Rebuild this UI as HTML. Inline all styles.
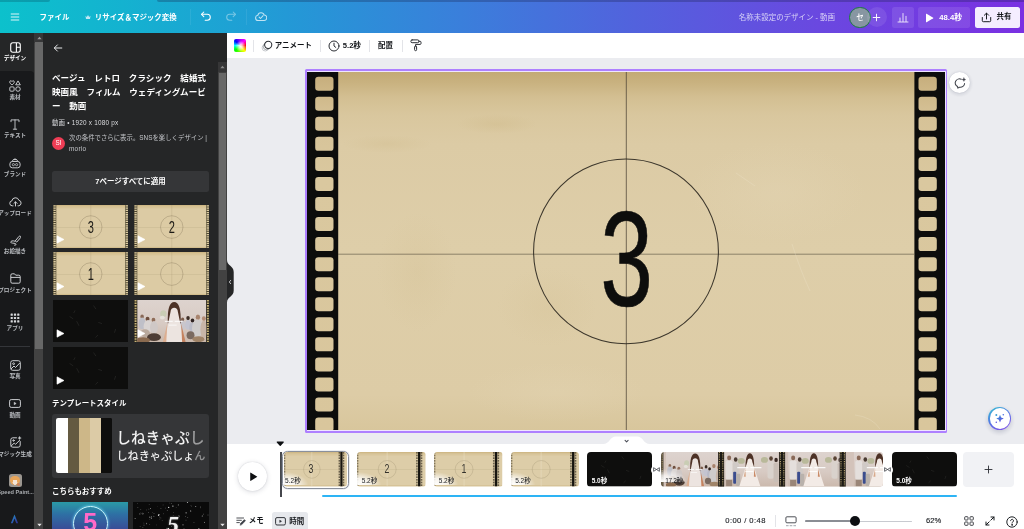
<!DOCTYPE html><html lang="ja"><head><meta charset="utf-8"><title>Canva</title><style>
*{box-sizing:border-box;margin:0;padding:0}
html,body{width:1024px;height:529px;overflow:hidden;background:#ebecf0}
body{font-family:"Liberation Sans","Noto Sans CJK JP",sans-serif;position:relative;-webkit-font-smoothing:antialiased}
div,svg{position:absolute}
.t{position:absolute;letter-spacing:0}
</style></head><body><div id="app" style="left:0;top:0;width:1024px;height:529px;will-change:transform;opacity:.999">
<svg width="0" height="0" style="left:0;top:0"><defs>
<filter id="b1" x="-20%" y="-20%" width="140%" height="140%"><feGaussianBlur stdDeviation="1.2"/></filter>
<filter id="b2" x="-20%" y="-20%" width="140%" height="140%"><feGaussianBlur stdDeviation="0.6"/></filter>
<linearGradient id="wall" x1="0" y1="0" x2="0" y2="1"><stop offset="0" stop-color="#ddd3ce"/><stop offset="0.55" stop-color="#d8cbc4"/><stop offset="1" stop-color="#cbb9ad"/></linearGradient>
<symbol id="wed" viewBox="0 0 70 43" preserveAspectRatio="none">
<rect width="70" height="43" fill="url(#wall)"/>
<g filter="url(#b2)">
<ellipse cx="26.500" cy="14" rx="3.200" ry="3.600" fill="#c9cdb4"/>
<ellipse cx="25.500" cy="18" rx="2.500" ry="2" fill="#e6e2da"/>
<ellipse cx="5" cy="17" rx="1.800" ry="2.200" fill="#8a6a58"/>
<ellipse cx="5" cy="24" rx="3.500" ry="6" fill="#bfc0c8"/>
<ellipse cx="10.500" cy="19.500" rx="2" ry="2.400" fill="#6e4e3e"/>
<ellipse cx="11" cy="27" rx="4.500" ry="6.500" fill="#d9d4d2"/>
<ellipse cx="16.500" cy="20.500" rx="1.900" ry="2.300" fill="#8f6c58"/>
<ellipse cx="17" cy="28" rx="4" ry="6.500" fill="#cfc8c6"/>
<ellipse cx="8" cy="34" rx="5" ry="4" fill="#b9a99c"/>
<ellipse cx="17" cy="38" rx="7" ry="4" fill="#4e3e34"/>
<ellipse cx="6" cy="41" rx="7" ry="3" fill="#8a6a50"/>
<ellipse cx="46" cy="20" rx="1.600" ry="2" fill="#7a5a4a"/>
<ellipse cx="46" cy="26" rx="3" ry="5" fill="#c9c6cc"/>
<ellipse cx="51.500" cy="18.500" rx="1.800" ry="2.200" fill="#3e2e28"/>
<ellipse cx="51.500" cy="25.500" rx="3" ry="5" fill="#c4c4d0"/>
<ellipse cx="56" cy="21" rx="1.800" ry="2.200" fill="#2e2420"/>
<ellipse cx="56" cy="28" rx="3.200" ry="5" fill="#b9bac6"/>
<ellipse cx="61.500" cy="17.500" rx="2.200" ry="2.600" fill="#a8846e"/>
<ellipse cx="61" cy="29" rx="5.500" ry="9" fill="#cfcccb"/>
<ellipse cx="67.500" cy="19" rx="2" ry="2.500" fill="#b48c74"/>
<ellipse cx="67.500" cy="30" rx="3.500" ry="9" fill="#c8b6a8"/>
<ellipse cx="54" cy="36" rx="4" ry="4" fill="#7a6a60"/>
<ellipse cx="62" cy="40" rx="6" ry="3" fill="#a08468"/>
<path d="M31 24C30.500 8 33 2 37.500 2C42 2 44.500 8 44 24Z" fill="#4e3226"/>
<path d="M33.800 12C33.800 6.500 41.200 6.500 41.200 12L47.500 43L27.500 43Z" fill="#ece4e0"/>
<path d="M30.500 24L26 43L29.500 43Z" fill="#dcae90"/>
<path d="M44.500 24L49 43L45.500 43Z" fill="#c4825e"/>
<rect x="28" y="21.300" width="8" height="1" fill="#fff" opacity=".9"/><rect x="38" y="21.300" width="8" height="1" fill="#fff" opacity=".9"/><rect x="32" y="25.200" width="8" height=".9" fill="#fff" opacity=".8"/>
</g>
</symbol>
<symbol id="wed2" viewBox="0 0 54 35" preserveAspectRatio="none">
<rect width="54" height="35" fill="url(#wall)"/>
<g filter="url(#b2)">
<ellipse cx="17" cy="9" rx="3.500" ry="3" fill="#b9b99a"/>
<ellipse cx="40" cy="8" rx="3.500" ry="3" fill="#b9b99a"/>
<ellipse cx="5" cy="6" rx="2" ry="2.500" fill="#8a6a58"/>
<rect x="1.500" y="8.500" width="7" height="20" rx="2.500" fill="#e4dfdc"/>
<rect x="2" y="28" width="6" height="7" fill="#9a8678"/>
<ellipse cx="11.500" cy="7.500" rx="1.800" ry="2.300" fill="#4a3a30"/>
<rect x="8.500" y="10" width="6" height="17" rx="2.500" fill="#d0cac6"/>
<rect x="9" y="20" width="3" height="12" rx="1" fill="#3a4e8e"/>
<rect x="12" y="22" width="4" height="13" rx="1" fill="#b9b2ac"/>
<ellipse cx="46.500" cy="6.500" rx="1.800" ry="2.300" fill="#5a4436"/>
<rect x="43" y="9" width="6.500" height="18" rx="2.500" fill="#d9d2cc"/>
<ellipse cx="51.500" cy="8" rx="1.700" ry="2.200" fill="#3a2c26"/>
<rect x="49" y="10.500" width="5" height="20" rx="2" fill="#c9beb6"/>
<path d="M21.300 19C20.800 6 22.700 1.300 25.500 1.300C28.300 1.300 30.200 6 29.700 19Z" fill="#4e3226"/>
<path d="M23 10C23 5.500 28 5.500 28 10L36 35L15 35Z" fill="#f3ebe6"/><path d="M21.200 17L19.500 25L21.500 25Z" fill="#d8a98a"/><path d="M29.800 17L31.500 25L29.500 25Z" fill="#c98a66"/>
<rect x="13" y="15.300" width="11" height="1.100" fill="#fff"/><rect x="26" y="15.300" width="11" height="1.100" fill="#fff"/><rect x="21" y="19.300" width="8" height="1" fill="#fff" opacity=".9"/>
</g>
</symbol>
<symbol id="paper" viewBox="0 0 76 43" preserveAspectRatio="none">
<rect width="76" height="43" fill="#dccba4"/>
<rect width="76" height="1.400" fill="#cdb682" opacity=".9"/>
<rect y="1.400" width="76" height="2" fill="#d4bf90" opacity=".6"/>
<rect y="41.800" width="76" height="1.200" fill="#cfb987" opacity=".8"/>
<rect x="0" width="3.300" height="43" fill="#4e4630"/>
<rect x="72.700" width="3.300" height="43" fill="#4e4630"/>
<line x1="1.650" y1="0.300" x2="1.650" y2="43" stroke="#dcccA2" stroke-width="2.300" stroke-dasharray="1.300 .9"/>
<line x1="74.350" y1="0.300" x2="74.350" y2="43" stroke="#dccca2" stroke-width="2.300" stroke-dasharray="1.300 .9"/>
<line x1="38" y1="0" x2="38" y2="43" stroke="#9a8c68" stroke-width=".35" opacity=".55"/>
<line x1="3" y1="22.300" x2="73" y2="22.300" stroke="#9a8c68" stroke-width=".35" opacity=".55"/>
<circle cx="38" cy="22" r="11.300" fill="none" stroke="#6a5e44" stroke-width=".4" opacity=".7"/>
</symbol>
<symbol id="dark" viewBox="0 0 76 43" preserveAspectRatio="none">
<rect width="76" height="43" fill="#0e0e0d"/>
<g stroke="#3a3a38" stroke-width=".5" stroke-linecap="round" opacity=".9">
<line x1="24" y1="22" x2="26" y2="26"/><line x1="41" y1="6" x2="43" y2="9"/><line x1="17" y1="17" x2="20" y2="19"/>
<line x1="46" y1="23" x2="49" y2="24"/><line x1="62" y1="33" x2="63" y2="30"/><line x1="43" y1="38" x2="45" y2="36"/><line x1="21" y1="13" x2="22" y2="11"/>
</g>
</symbol>
</defs></svg>
<div style="left:0px;top:0px;width:1024px;height:33px;background:linear-gradient(90deg,#0cc1cc 0%,#14b2d0 12%,#2399d6 28%,#3a7fdb 45%,#5262dd 62%,#6a48e0 80%,#7a30e2 100%);"></div>
<div style="left:0px;top:0px;width:50px;height:2px;background:rgba(0,40,60,.22);border-radius:0 0 4px 0"></div>
<div style="left:157px;top:0px;width:867px;height:2px;background:rgba(20,30,70,.28);border-radius:0 0 0 4px"></div>
<svg style="left:10px;top:12px" width="10" height="10" viewBox="0 0 10 10"><path d="M1.2 2h7.6M1.2 5h7.6M1.2 8h7.6" stroke="#fff" stroke-width=".95" stroke-linecap="round" opacity=".9"/></svg>
<div class="t" style="left:39.5px;top:11.90px;height:12px;line-height:12px;font-size:7.47px;color:#fff;font-weight:700;white-space:nowrap;">ファイル</div>
<svg style="left:84.5px;top:14px" width="6" height="6" viewBox="0 0 12 12"><path d="M1 3.5l2.6 2.3L6 2l2.4 3.800L11 3.500 10 10H2z" fill="#e9f4ff" opacity=".8"/></svg>
<div class="t" style="left:94.8px;top:11.90px;height:12px;line-height:12px;font-size:7.47px;color:#fff;font-weight:700;white-space:nowrap;">リサイズ＆マジック変換</div>
<div style="left:189.5px;top:9px;width:1px;height:16px;background:rgba(255,255,255,.08)"></div>
<svg style="left:200px;top:10.300px" width="12" height="12" viewBox="0 0 12 12"><path d="M1.600 4.300H7.300a3 3 0 0 1 0 6H5.200" fill="none" stroke="#fff" stroke-width="1.05" stroke-linecap="round"/><path d="M3.800 2L1.500 4.300l2.300 2.300" fill="none" stroke="#fff" stroke-width="1.05" stroke-linecap="round" stroke-linejoin="round"/></svg>
<svg style="left:224.5px;top:10.3px;opacity:.4" width="12" height="12" viewBox="0 0 12 12"><path d="M10.400 4.300H4.700a3 3 0 0 0 0 6H6.800" fill="none" stroke="#fff" stroke-width="1.05" stroke-linecap="round"/><path d="M8.200 2l2.300 2.300-2.300 2.300" fill="none" stroke="#fff" stroke-width="1.05" stroke-linecap="round" stroke-linejoin="round"/></svg>
<div style="left:245.7px;top:9px;width:1px;height:16px;background:rgba(255,255,255,.08)"></div>
<svg style="left:255.3px;top:10.8px;opacity:.72" width="12" height="11" viewBox="0 0 12 11"><path d="M3.200 9.500a2.600 2.600 0 0 1-.4-5.170A3.300 3.300 0 0 1 9.200 4.100a2.700 2.700 0 0 1-.3 5.400z" fill="none" stroke="#fff" stroke-width="1.050" stroke-linejoin="round"/><path d="M4.100 6.100l1.400 1.400 2.600-2.800" fill="none" stroke="#fff" stroke-width="1.050" stroke-linecap="round" stroke-linejoin="round"/></svg>
<div class="t" style="left:738.8px;top:12.00px;height:12px;line-height:12px;font-size:7.47px;color:rgba(255,255,255,.72);font-weight:400;white-space:nowrap;">名称未設定のデザイン - 動画</div>
<div style="left:849.4px;top:6.6px;width:21.2px;height:21.2px;border-radius:50%;background:#8796a2;border:1.900px solid #1b7b3e;"></div>
<div class="t" style="left:849.7px;top:12.00px;height:12px;line-height:12px;font-size:7.6px;color:#fff;font-weight:500;white-space:nowrap;width:20.6px;text-align:center;">セ</div>
<div style="left:867px;top:7px;width:20px;height:20px;border-radius:50%;background:rgba(255,255,255,.09);z-index:0"></div>
<svg style="left:872.1px;top:12.500px" width="9" height="9" viewBox="0 0 9 9"><path d="M4.500 1.200v6.600M1.200 4.500h6.600" stroke="#fff" stroke-width="1" stroke-linecap="round" opacity=".95"/></svg>
<div style="left:891.8px;top:6.5px;width:21.8px;height:21px;border-radius:2.5px;background:rgba(255,255,255,.1)"></div>
<svg style="left:897px;top:11.500px" width="12" height="11" viewBox="0 0 12 11"><path d="M1 10h10M3 9.500V6M6 9.500V1.500M9 9.500V4.300" stroke="#fff" stroke-width=".9" stroke-linecap="round" opacity=".9" fill="none"/></svg>
<div style="left:918px;top:6.5px;width:52.4px;height:21px;border-radius:2.5px;background:rgba(255,255,255,.1)"></div>
<svg style="left:924.5px;top:12.500px" width="9" height="10" viewBox="0 0 9 10"><path d="M1 1.100v7.800a.4.4 0 0 0 .6.340l6.600-3.900a.4.400 0 0 0 0-.68L1.600.76A.4.400 0 0 0 1 1.100z" fill="#fff"/></svg>
<div class="t" style="left:939.3px;top:11.60px;height:12px;line-height:12px;font-size:7.7px;color:#fff;font-weight:700;white-space:nowrap;">48.4秒</div>
<div style="left:975.2px;top:6.5px;width:45px;height:21px;border-radius:2.5px;background:#f4edff"></div>
<svg style="left:980.5px;top:11.500px" width="11" height="11" viewBox="0 0 11 11"><path d="M1.300 5.500v3.200a1 1 0 0 0 1 1h6.400a1 1 0 0 0 1-1V5.500M5.500 7V1.300M3.300 3.300l2.200-2.200 2.200 2.200" fill="none" stroke="#1a1d22" stroke-width="1" stroke-linecap="round" stroke-linejoin="round"/></svg>
<div class="t" style="left:996.6px;top:11.30px;height:12px;line-height:12px;font-size:7.47px;color:#15181c;font-weight:700;white-space:nowrap;">共有</div>
<div style="left:36px;top:33px;width:182px;height:496px;background:#252627"></div>
<div style="left:0px;top:33px;width:36px;height:496px;background:#18191b"></div>
<div style="left:0px;top:33px;width:35px;height:38.5px;background:#252627"></div>
<div style="left:0px;top:71px;width:35px;height:6px;background:#252627"></div>
<div style="left:0px;top:71px;width:35px;height:12px;background:#18191b;border-radius:0 5px 0 0"></div>
<div class="t" style="left:-12px;top:54.20px;height:8px;line-height:8px;font-size:5.6px;color:#fff;font-weight:700;white-space:nowrap;width:54px;text-align:center;">デザイン</div>
<div class="t" style="left:-12px;top:93.00px;height:8px;line-height:8px;font-size:5.6px;color:#b9bcc0;font-weight:700;white-space:nowrap;width:54px;text-align:center;">素材</div>
<div class="t" style="left:-12px;top:131.40px;height:8px;line-height:8px;font-size:5.6px;color:#b9bcc0;font-weight:700;white-space:nowrap;width:54px;text-align:center;">テキスト</div>
<div class="t" style="left:-12px;top:170.10px;height:8px;line-height:8px;font-size:5.6px;color:#b9bcc0;font-weight:700;white-space:nowrap;width:54px;text-align:center;">ブランド</div>
<div class="t" style="left:-12px;top:208.70px;height:8px;line-height:8px;font-size:5.6px;color:#b9bcc0;font-weight:700;white-space:nowrap;width:54px;text-align:center;">アップロード</div>
<div class="t" style="left:-12px;top:247.20px;height:8px;line-height:8px;font-size:5.6px;color:#b9bcc0;font-weight:700;white-space:nowrap;width:54px;text-align:center;">お絵描き</div>
<div class="t" style="left:-12px;top:285.80px;height:8px;line-height:8px;font-size:5.6px;color:#b9bcc0;font-weight:700;white-space:nowrap;width:54px;text-align:center;">プロジェクト</div>
<div class="t" style="left:-12px;top:324.30px;height:8px;line-height:8px;font-size:5.6px;color:#b9bcc0;font-weight:700;white-space:nowrap;width:54px;text-align:center;">アプリ</div>
<div class="t" style="left:-12px;top:372.00px;height:8px;line-height:8px;font-size:5.6px;color:#b9bcc0;font-weight:700;white-space:nowrap;width:54px;text-align:center;">写真</div>
<div class="t" style="left:-12px;top:410.70px;height:8px;line-height:8px;font-size:5.6px;color:#b9bcc0;font-weight:700;white-space:nowrap;width:54px;text-align:center;">動画</div>
<div class="t" style="left:-12px;top:449.50px;height:8px;line-height:8px;font-size:5.6px;color:#b9bcc0;font-weight:700;white-space:nowrap;width:54px;text-align:center;">マジック生成</div>
<div class="t" style="left:-2.8px;top:488.00px;height:8px;line-height:8px;font-size:5.6px;color:#a9acb0;font-weight:700;white-space:nowrap;">Speed Paint...</div>
<svg style="left:9.500px;top:41.900px" width="11" height="11" viewBox="0 0 11 11"><rect x=".7" y=".7" width="9.600" height="9.600" rx="2.200" fill="none" stroke="#fff" stroke-width="1.1"/><path d="M6.400.9v9.200M6.400 5.200h3.800" stroke="#fff" stroke-width="1.1" fill="none"/></svg>
<svg style="left:9px;top:79.700px" width="12" height="12" viewBox="0 0 12 12" fill="none" stroke="#d6d8db" stroke-width=".9" stroke-linejoin="round"><path d="M3 4.900C1.800 4 .7 3.100.7 2A1.200 1.200 0 0 1 3 1.500 1.200 1.200 0 0 1 5.300 2C5.300 3.100 4.200 4 3 4.900z"/><path d="M9 .9l2.300 3.900H6.700z"/><rect x=".8" y="6.900" width="4.300" height="4.300" rx="1"/><circle cx="9" cy="9.050" r="2.250"/></svg>
<svg style="left:10px;top:118.900px" width="10" height="11" viewBox="0 0 10 11" fill="none" stroke="#d6d8db" stroke-width=".85" stroke-linecap="round" stroke-linejoin="round"><path d="M1 2.700V.9h8v1.800M5 .9v9.200M3.300 10.200h3.400"/></svg>
<svg style="left:9px;top:156.600px" width="12" height="12" viewBox="0 0 12 12" fill="none" stroke="#d6d8db" stroke-width=".9" stroke-linejoin="round"><path d="M3.200 4.600C3.600 1.200 8.400 1.200 8.800 4.600"/><path d="M4.600 3.300C5 2.300 7 2.300 7.400 3.300"/><rect x=".9" y="4.500" width="10.200" height="6.300" rx="2.400"/><circle cx="4.400" cy="7.650" r="1.100" stroke-width=".7"/><circle cx="7.600" cy="7.650" r="1.100" stroke-width=".7"/></svg>
<svg style="left:8.500px;top:195.900px" width="13" height="11" viewBox="0 0 13 11" fill="none" stroke="#d6d8db" stroke-width=".95" stroke-linecap="round" stroke-linejoin="round"><path d="M4 9.800H3.300a2.500 2.500 0 0 1-.4-4.970A3.600 3.600 0 0 1 9.900 4.300a2.800 2.800 0 0 1-.2 5.500H9"/><path d="M6.500 10V6M4.900 7.400l1.600-1.600 1.600 1.600"/></svg>
<svg style="left:9.500px;top:234.900px" width="11" height="11" viewBox="0 0 11 11" fill="none" stroke="#d6d8db" stroke-width=".95" stroke-linecap="round" stroke-linejoin="round"><path d="M5.500 5.600l3.600-4.300a1 1 0 0 1 1.500 1.300L7 6.800z"/><path d="M5 6.200C2.500 5.300.6 6 .8 7.300c.2 1.300 3 .5 4.600 1.300 1.200.6.700 1.700-.8 1.600"/></svg>
<svg style="left:9.500px;top:272.900px" width="11" height="11" viewBox="0 0 11 11" fill="none" stroke="#d6d8db" stroke-width=".95" stroke-linejoin="round"><path d="M.8 3V2.200A1.400 1.400 0 0 1 2.200.8h2.300l1.200 1.400h3.100a1.400 1.400 0 0 1 1.400 1.400V8.800a1.400 1.400 0 0 1-1.400 1.400H2.200A1.400 1.400 0 0 1 .8 8.800zM.8 4.400h9.400"/></svg>
<svg style="left:10px;top:312.700px" width="10" height="10" viewBox="0 0 10 10" fill="#d6d8db"><rect x="0.6" y="0.6" width="2.200" height="2.200" rx=".5"/><rect x="3.9" y="0.6" width="2.200" height="2.200" rx=".5"/><rect x="7.199999999999999" y="0.6" width="2.200" height="2.200" rx=".5"/><rect x="0.6" y="3.9" width="2.200" height="2.200" rx=".5"/><rect x="3.9" y="3.9" width="2.200" height="2.200" rx=".5"/><rect x="7.199999999999999" y="3.9" width="2.200" height="2.200" rx=".5"/><rect x="0.6" y="7.199999999999999" width="2.200" height="2.200" rx=".5"/><rect x="3.9" y="7.199999999999999" width="2.200" height="2.200" rx=".5"/><rect x="7.199999999999999" y="7.199999999999999" width="2.200" height="2.200" rx=".5"/></svg>
<div style="left:0px;top:345.5px;width:30px;height:1px;background:#34363a"></div>
<svg style="left:9.500px;top:359.800px" width="11" height="11" viewBox="0 0 11 11" fill="none" stroke="#d6d8db" stroke-width=".95" stroke-linejoin="round"><rect x=".7" y=".7" width="9.600" height="9.600" rx="2"/><circle cx="3.600" cy="3.700" r=".9"/><path d="M1 9l3-3 1.500 1.500L9.800 3"/></svg>
<svg style="left:9px;top:398.800px" width="12" height="9" viewBox="0 0 12 9" fill="none" stroke="#d6d8db" stroke-width=".95" stroke-linejoin="round"><rect x=".6" y=".6" width="10.800" height="7.800" rx="1.600"/><path d="M5.200 3.200v2.600l2-1.300z" fill="#d6d8db" stroke-width=".5"/></svg>
<svg style="left:9.500px;top:436px" width="12" height="12" viewBox="0 0 12 12" fill="none" stroke="#d6d8db" stroke-width=".95" stroke-linejoin="round" stroke-linecap="round"><path d="M6.500 1.800H2.800a2 2 0 0 0-2 2v5.400a2 2 0 0 0 2 2h5.400a2 2 0 0 0 2-2V5.500"/><path d="M1.200 10l3-3 1.400 1.300 4-4"/><circle cx="3.500" cy="4.500" r=".7"/><path d="M9.600.4l.5 1.200 1.200.5-1.200.5-.5 1.200-.5-1.200-1.200-.5 1.200-.5z" fill="#d6d8db" stroke-width=".3"/></svg>
<div style="left:8.5px;top:474px;width:13px;height:13.4px;border-radius:2.5px;background:#9b9690;overflow:hidden"><div style="left:1.500px;top:2px;width:10px;height:9px;border-radius:45% 45% 50% 50%;background:radial-gradient(circle at 50% 70%,#f3e4d6 0 30%,#e8a55a 32% 100%)"></div><div style="left:8px;top:8.500px;width:3.500px;height:3.500px;border-radius:50%;background:#c9805a"></div></div>
<svg style="left:10.300px;top:514.300px" width="9" height="10" viewBox="0 0 10 12"><defs><linearGradient id="ag" x1="0" y1="0" x2="1" y2="1"><stop offset="0" stop-color="#2aa9b4"/><stop offset=".5" stop-color="#2a5fb6"/><stop offset="1" stop-color="#2e2a86"/></linearGradient></defs><path d="M5 .6L.6 11h2.300L5 5.300 7.100 11h2.300z" fill="url(#ag)"/></svg>
<div style="left:34.3px;top:33px;width:8.9px;height:496px;background:#424242"></div>
<div style="left:34.3px;top:33px;width:8.9px;height:9.5px;background:#363637"></div>
<div style="left:34.8px;top:42.3px;width:7.9px;height:307px;background:#686868"></div>
<svg style="left:36.500px;top:35.500px" width="5" height="4" viewBox="0 0 5 4"><path d="M.3 3.200L2.500.8l2.200 2.400z" fill="#9a9a9a"/></svg>
<svg style="left:36.500px;top:523px" width="5" height="4" viewBox="0 0 5 4"><path d="M.3.8L2.500 3.200 4.700.8z" fill="#e8e8e8"/></svg>
<svg style="left:53px;top:42.500px" width="10" height="10" viewBox="0 0 10 10"><path d="M8.800 5H1.500M4.400 1.900L1.300 5l3.100 3.100" fill="none" stroke="#e8e9eb" stroke-width="1" stroke-linecap="round" stroke-linejoin="round"/></svg>
<div class="t" style="left:52px;top:70.700px;width:170px;line-height:14px;font-size:8.53px;color:#fff;font-weight:700;white-space:nowrap;letter-spacing:.1px">ベージュ　レトロ　クラシック　結婚式<br>映画風　フィルム　ウェディングムービ<br>ー　動画</div>
<div class="t" style="left:52px;top:116.80px;height:12px;line-height:12px;font-size:6.4px;color:#dcdde0;font-weight:400;white-space:nowrap;letter-spacing:.22px;">動画 • 1920 x 1080 px</div>
<div style="left:51.9px;top:136.5px;width:13px;height:13px;border-radius:50%;background:#ef3d55"></div>
<div class="t" style="left:51.9px;top:137.10px;height:12px;line-height:12px;font-size:6.3px;color:#fff;font-weight:400;white-space:nowrap;width:13px;text-align:center;">SI</div>
<div class="t" style="left:69px;top:132.00px;height:12px;line-height:12px;font-size:6.4px;color:#c4c6ca;font-weight:400;white-space:nowrap;">次の条件でさらに表示。SNSを楽しくデザイン |</div>
<div class="t" style="left:69px;top:142.90px;height:12px;line-height:12px;font-size:6.4px;color:#c4c6ca;font-weight:400;white-space:nowrap;letter-spacing:.25px;">morio</div>
<div style="left:52px;top:170.6px;width:157px;height:21.4px;border-radius:2.5px;background:#353638"></div>
<div class="t" style="left:52px;top:176.00px;height:12px;line-height:12px;font-size:7.47px;color:#fff;font-weight:700;white-space:nowrap;width:157px;text-align:center;">7ページすべてに適用</div>
<div style="left:52.6px;top:205.1px;width:75.5px;height:43.1px;overflow:hidden;"><svg style="left:0;top:0" width="75.5" height="43.1"><use href="#paper" width="75.5" height="43.1"/></svg><div class="t" style="left:0;top:0;width:75.5px;height:43.1px;line-height:45.5px;text-align:center;font-size:15.800px;color:#1c1a16;transform:scaleX(.7);font-weight:400">3</div><svg style="left:3.400px;top:29.8px" width="9" height="9" viewBox="0 0 9 9"><path d="M1 .8v7.400L8 4.500z" fill="#fff" stroke="#fff" stroke-width=".6" stroke-linejoin="round"/></svg></div>
<div style="left:133.5px;top:205.1px;width:75.5px;height:43.1px;overflow:hidden;"><svg style="left:0;top:0" width="75.5" height="43.1"><use href="#paper" width="75.5" height="43.1"/></svg><div class="t" style="left:0;top:0;width:75.5px;height:43.1px;line-height:45.5px;text-align:center;font-size:15.800px;color:#1c1a16;transform:scaleX(.7);font-weight:400">2</div><svg style="left:3.400px;top:29.8px" width="9" height="9" viewBox="0 0 9 9"><path d="M1 .8v7.400L8 4.500z" fill="#fff" stroke="#fff" stroke-width=".6" stroke-linejoin="round"/></svg></div>
<div style="left:52.6px;top:252.4px;width:75.5px;height:43.1px;overflow:hidden;"><svg style="left:0;top:0" width="75.5" height="43.1"><use href="#paper" width="75.5" height="43.1"/></svg><div class="t" style="left:0;top:0;width:75.5px;height:43.1px;line-height:45.5px;text-align:center;font-size:15.800px;color:#1c1a16;transform:scaleX(.7);font-weight:400">1</div><svg style="left:3.400px;top:29.8px" width="9" height="9" viewBox="0 0 9 9"><path d="M1 .8v7.400L8 4.500z" fill="#fff" stroke="#fff" stroke-width=".6" stroke-linejoin="round"/></svg></div>
<div style="left:133.5px;top:252.4px;width:75.5px;height:43.1px;overflow:hidden;"><svg style="left:0;top:0" width="75.5" height="43.1"><use href="#paper" width="75.5" height="43.1"/></svg><svg style="left:3.400px;top:29.8px" width="9" height="9" viewBox="0 0 9 9"><path d="M1 .8v7.400L8 4.500z" fill="#fff" stroke="#fff" stroke-width=".6" stroke-linejoin="round"/></svg></div>
<div style="left:52.6px;top:299.9px;width:75.5px;height:42.1px;overflow:hidden;"><svg style="left:0;top:0" width="75.5" height="42.1"><use href="#dark" width="75.5" height="42.1"/></svg><svg style="left:3.400px;top:28.8px" width="9" height="9" viewBox="0 0 9 9"><path d="M1 .8v7.400L8 4.500z" fill="#fff" stroke="#fff" stroke-width=".6" stroke-linejoin="round"/></svg></div>
<div style="left:133.5px;top:299.9px;width:75.5px;height:42.1px;overflow:hidden;background:#2a261c"><svg style="left:0;top:0" width="75.5" height="42.1" viewBox="0 0 76 43" preserveAspectRatio="none"><use href="#wed" x="3.200" y="0" width="69.600" height="43"/><line x1="1.6" y1="0" x2="1.6" y2="43" stroke="#c8b478" stroke-width="2" stroke-dasharray="1.6 1"/><line x1="74.4" y1="0" x2="74.4" y2="43" stroke="#c8b478" stroke-width="2" stroke-dasharray="1.6 1"/></svg><svg style="left:3px;top:29.6px" width="9" height="9" viewBox="0 0 9 9"><path d="M1 .8v7.400L8 4.500z" fill="#fff" stroke="#fff" stroke-width=".6" stroke-linejoin="round"/></svg></div>
<div style="left:52.6px;top:346.9px;width:75.5px;height:42.1px;overflow:hidden;"><svg style="left:0;top:0" width="75.5" height="42.1"><use href="#dark" width="75.5" height="42.1"/></svg><svg style="left:3.400px;top:28.8px" width="9" height="9" viewBox="0 0 9 9"><path d="M1 .8v7.400L8 4.500z" fill="#fff" stroke="#fff" stroke-width=".6" stroke-linejoin="round"/></svg></div>
<div class="t" style="left:52px;top:397.50px;height:12px;line-height:12px;font-size:7.47px;color:#fff;font-weight:700;white-space:nowrap;">テンプレートスタイル</div>
<div style="left:52px;top:413.6px;width:157px;height:64.6px;border-radius:3px;background:#353638"></div>
<div style="left:56px;top:418px;width:56px;height:55.4px;border-radius:2px;overflow:hidden;background:#0e0e0d"><div style="left:0px;top:0;width:12.3px;height:56px;background:#ffffff"></div><div style="left:12px;top:0;width:11.3px;height:56px;background:#645a41"></div><div style="left:23px;top:0;width:10.9px;height:56px;background:#cdb788"></div><div style="left:33.599999999999994px;top:0;width:11.9px;height:56px;background:#dccba6"></div><div style="left:45.2px;top:0;width:11.100000000000001px;height:56px;background:#0e0e0d"></div></div>
<div class="t" style="left:116.2px;top:429.30px;height:18px;line-height:18px;font-size:14.7px;color:#f2f2f2;font-weight:500;white-space:nowrap;">しねきゃぷ<span style="opacity:.55">し</span></div>
<div class="t" style="left:116.5px;top:449.20px;height:14px;line-height:14px;font-size:11.1px;color:#eeeeee;font-weight:500;white-space:nowrap;">しねきゃぷしょ<span style="opacity:.5">ん</span></div>
<div class="t" style="left:52px;top:485.70px;height:12px;line-height:12px;font-size:7.47px;color:#fff;font-weight:700;white-space:nowrap;">こちらもおすすめ</div>
<div style="left:52.3px;top:501.8px;width:76px;height:28px;overflow:hidden;background:linear-gradient(180deg,#2a9aa6 0%,#2e6fa4 45%,#3a4a96 100%)"><div style="left:20.500px;top:4.500px;width:35px;height:35px;border-radius:50%;border:1.500px solid #c9f8ff;box-shadow:0 0 3px #6fe0ff"></div><div class="t" style="left:0;top:8.500px;width:76px;text-align:center;font-size:25px;line-height:24px;font-weight:700;color:#ff69c8">5</div></div>
<div style="left:133.3px;top:501.8px;width:75.5px;height:28px;overflow:hidden;background:#0a0a0a"><svg style="left:0;top:0" width="75.500" height="28"><circle cx="24.4" cy="4.2" r="0.25" fill="#fff" opacity="0.39"/><circle cx="40.5" cy="10.2" r="0.25" fill="#fff" opacity="0.90"/><circle cx="16.2" cy="2.4" r="0.45" fill="#fff" opacity="0.39"/><circle cx="6.8" cy="11.9" r="0.6" fill="#fff" opacity="0.42"/><circle cx="16.9" cy="17.6" r="0.25" fill="#fff" opacity="0.70"/><circle cx="29.9" cy="27.3" r="0.25" fill="#fff" opacity="0.68"/><circle cx="10.1" cy="11.7" r="0.6" fill="#fff" opacity="0.42"/><circle cx="23.3" cy="22.9" r="0.3" fill="#fff" opacity="0.41"/><circle cx="43.1" cy="5.3" r="0.25" fill="#fff" opacity="0.68"/><circle cx="4.7" cy="1.7" r="0.3" fill="#fff" opacity="0.65"/><circle cx="40.1" cy="21.8" r="0.45" fill="#fff" opacity="0.70"/><circle cx="34.2" cy="8.4" r="0.3" fill="#fff" opacity="0.77"/><circle cx="18.4" cy="16.1" r="0.6" fill="#fff" opacity="0.65"/><circle cx="25.9" cy="12.6" r="0.6" fill="#fff" opacity="0.94"/><circle cx="8.9" cy="11.7" r="0.35" fill="#fff" opacity="0.44"/><circle cx="36.9" cy="1.1" r="0.25" fill="#fff" opacity="0.81"/><circle cx="43.3" cy="24.5" r="0.35" fill="#fff" opacity="0.55"/><circle cx="26.4" cy="13.9" r="0.45" fill="#fff" opacity="0.39"/><circle cx="7.1" cy="7.6" r="0.25" fill="#fff" opacity="0.39"/><circle cx="53.0" cy="18.1" r="0.45" fill="#fff" opacity="0.52"/><circle cx="29.1" cy="18.7" r="0.25" fill="#fff" opacity="0.91"/><circle cx="26.8" cy="17.1" r="0.45" fill="#fff" opacity="0.39"/><circle cx="58.0" cy="3.6" r="0.3" fill="#fff" opacity="0.59"/><circle cx="69.2" cy="13.9" r="0.3" fill="#fff" opacity="0.62"/><circle cx="41.5" cy="24.7" r="0.45" fill="#fff" opacity="0.87"/><circle cx="21.0" cy="11.6" r="0.35" fill="#fff" opacity="0.76"/><circle cx="28.7" cy="6.5" r="0.25" fill="#fff" opacity="0.46"/><circle cx="17.5" cy="6.5" r="0.45" fill="#fff" opacity="0.85"/><circle cx="13.8" cy="7.9" r="0.3" fill="#fff" opacity="0.60"/><circle cx="27.9" cy="15.9" r="0.3" fill="#fff" opacity="0.76"/><circle cx="38.9" cy="17.3" r="0.25" fill="#fff" opacity="0.62"/><circle cx="65.8" cy="26.7" r="0.6" fill="#fff" opacity="0.59"/><circle cx="30.1" cy="2.9" r="0.45" fill="#fff" opacity="0.39"/><circle cx="5.1" cy="5.8" r="0.3" fill="#fff" opacity="0.42"/><circle cx="45.4" cy="2.9" r="0.6" fill="#fff" opacity="0.44"/><circle cx="7.7" cy="10.2" r="0.25" fill="#fff" opacity="0.39"/><circle cx="15.7" cy="10.5" r="0.35" fill="#fff" opacity="0.92"/><circle cx="45.5" cy="13.3" r="0.25" fill="#fff" opacity="0.86"/><circle cx="75.0" cy="13.0" r="0.45" fill="#fff" opacity="0.54"/><circle cx="10.9" cy="21.0" r="0.35" fill="#fff" opacity="0.64"/><circle cx="52.3" cy="14.5" r="0.3" fill="#fff" opacity="0.92"/><circle cx="39.9" cy="4.1" r="0.6" fill="#fff" opacity="0.90"/><circle cx="57.2" cy="8.3" r="0.25" fill="#fff" opacity="0.77"/><circle cx="19.7" cy="10.3" r="0.3" fill="#fff" opacity="0.56"/><circle cx="16.8" cy="15.2" r="0.6" fill="#fff" opacity="0.55"/><circle cx="16.8" cy="22.7" r="0.3" fill="#fff" opacity="0.83"/><circle cx="61.8" cy="20.7" r="0.3" fill="#fff" opacity="0.47"/><circle cx="37.2" cy="20.5" r="0.25" fill="#fff" opacity="0.82"/><circle cx="35.7" cy="5.4" r="0.6" fill="#fff" opacity="0.92"/><circle cx="33.8" cy="26.2" r="0.35" fill="#fff" opacity="0.92"/><circle cx="27.5" cy="6.2" r="0.3" fill="#fff" opacity="0.63"/><circle cx="25.5" cy="13.5" r="0.6" fill="#fff" opacity="0.85"/><circle cx="36.2" cy="18.3" r="0.25" fill="#fff" opacity="0.85"/><circle cx="9.1" cy="10.9" r="0.3" fill="#fff" opacity="0.64"/><circle cx="13.5" cy="22.1" r="0.35" fill="#fff" opacity="0.40"/><circle cx="71.4" cy="20.2" r="0.45" fill="#fff" opacity="0.59"/><circle cx="71.5" cy="20.3" r="0.3" fill="#fff" opacity="0.95"/><circle cx="2.1" cy="16.5" r="0.45" fill="#fff" opacity="0.83"/><circle cx="11.0" cy="23.1" r="0.45" fill="#fff" opacity="0.74"/><circle cx="26.5" cy="15.4" r="0.3" fill="#fff" opacity="0.36"/><circle cx="60.4" cy="20.3" r="0.25" fill="#fff" opacity="0.67"/><circle cx="70.5" cy="12.1" r="0.3" fill="#fff" opacity="0.85"/><circle cx="15.9" cy="7.1" r="0.35" fill="#fff" opacity="0.65"/><circle cx="57.7" cy="9.1" r="0.6" fill="#fff" opacity="0.60"/><circle cx="9.9" cy="25.5" r="0.35" fill="#fff" opacity="0.89"/><circle cx="50.0" cy="22.8" r="0.6" fill="#fff" opacity="0.60"/><circle cx="69.3" cy="14.0" r="0.6" fill="#fff" opacity="0.44"/><circle cx="38.5" cy="24.4" r="0.3" fill="#fff" opacity="0.72"/><circle cx="58.6" cy="4.2" r="0.3" fill="#fff" opacity="0.63"/><circle cx="54.8" cy="15.6" r="0.35" fill="#fff" opacity="0.76"/><circle cx="40.1" cy="13.5" r="0.25" fill="#fff" opacity="0.88"/><circle cx="4.3" cy="5.4" r="0.25" fill="#fff" opacity="0.81"/><circle cx="38.3" cy="15.7" r="0.25" fill="#fff" opacity="0.62"/><circle cx="46.2" cy="14.2" r="0.6" fill="#fff" opacity="0.47"/><circle cx="20.9" cy="14.2" r="0.45" fill="#fff" opacity="0.65"/><circle cx="18.7" cy="14.6" r="0.35" fill="#fff" opacity="0.90"/><circle cx="67.4" cy="5.7" r="0.45" fill="#fff" opacity="0.43"/><circle cx="9.2" cy="12.4" r="0.25" fill="#fff" opacity="0.75"/><circle cx="32.3" cy="6.0" r="0.35" fill="#fff" opacity="0.82"/><circle cx="67.7" cy="4.3" r="0.35" fill="#fff" opacity="0.44"/><circle cx="66.7" cy="27.1" r="0.3" fill="#fff" opacity="0.80"/><circle cx="7.1" cy="24.8" r="0.3" fill="#fff" opacity="0.94"/><circle cx="62.8" cy="4.5" r="0.45" fill="#fff" opacity="0.95"/><circle cx="30.5" cy="11.8" r="0.35" fill="#fff" opacity="0.54"/><circle cx="54.5" cy="0.5" r="0.6" fill="#fff" opacity="0.63"/><circle cx="53.1" cy="10.8" r="0.6" fill="#fff" opacity="0.72"/><circle cx="38.7" cy="1.8" r="0.3" fill="#fff" opacity="0.93"/><circle cx="7.9" cy="7.4" r="0.25" fill="#fff" opacity="0.89"/><circle cx="13.7" cy="21.2" r="0.45" fill="#fff" opacity="0.86"/><circle cx="51.0" cy="26.5" r="0.45" fill="#fff" opacity="0.44"/></svg><div class="t" style="left:2px;top:11.500px;width:75.500px;text-align:center;font-size:24px;line-height:22px;font-weight:700;font-style:italic;color:#f1f1f1;font-family:'Liberation Serif',serif;text-shadow:0 0 2px rgba(255,255,255,.5)">5</div></div>
<div style="left:217.5px;top:33px;width:9.5px;height:496px;background:#252627"></div>
<div style="left:217.7px;top:62px;width:9.3px;height:467px;background:#424242"></div>
<div style="left:218.5px;top:72.5px;width:7.8px;height:197px;background:#686868"></div>
<div style="left:217.7px;top:62px;width:9.3px;height:10px;background:#363637"></div>
<svg style="left:220px;top:65px" width="5" height="4" viewBox="0 0 5 4"><path d="M.3 3.200L2.500.8l2.200 2.400z" fill="#8a8a8a"/></svg>
<svg style="left:220px;top:523px" width="5" height="4" viewBox="0 0 5 4"><path d="M.3.8L2.500 3.200 4.700.8z" fill="#e8e8e8"/></svg>
<div style="left:227px;top:33px;width:797px;height:25.2px;background:#fff"></div>
<div style="left:234px;top:39.2px;width:12.3px;height:12.6px;border-radius:2px;background:conic-gradient(from 0deg at 50% 50%,#a000ff,#ff00ff 45deg,#ff0000 90deg,#ffff00 140deg,#00ff00 225deg,#00ffff 270deg,#0000ff 315deg,#a000ff);overflow:hidden"><div style="left:0;top:0;width:100%;height:100%;background:radial-gradient(circle at 55% 55%,#fff 0,rgba(255,255,255,.75) 18%,rgba(255,255,255,0) 55%)"></div></div>
<div style="left:252.6px;top:39.5px;width:1px;height:12.5px;background:#e3e4e8"></div>
<svg style="left:260.500px;top:39.500px" width="12" height="12" viewBox="0 0 12 12" fill="none"><circle cx="4.300" cy="7.800" r="3.200" stroke="#b9bcc2" stroke-width=".8"/><circle cx="5.600" cy="6.500" r="3.300" stroke="#8d9096" stroke-width=".8" fill="#fff"/><circle cx="7.200" cy="4.800" r="3.600" stroke="#2a2d33" stroke-width="1.050" fill="#fff"/></svg>
<div class="t" style="left:274.8px;top:39.70px;height:12px;line-height:12px;font-size:7.47px;color:#0f1216;font-weight:600;white-space:nowrap;">アニメート</div>
<div style="left:320.1px;top:39.5px;width:1px;height:12.5px;background:#e3e4e8"></div>
<svg style="left:328.300px;top:39.800px" width="12" height="12" viewBox="0 0 12 12" fill="none" stroke="#2a2d33" stroke-width="1" stroke-linecap="round"><circle cx="6" cy="6" r="5"/><path d="M6 3.200V6l1.800 1.400"/></svg>
<div class="t" style="left:342.8px;top:39.70px;height:12px;line-height:12px;font-size:7.6px;color:#0f1216;font-weight:600;white-space:nowrap;">5.2秒</div>
<div style="left:369.2px;top:39.5px;width:1px;height:12.5px;background:#e3e4e8"></div>
<div class="t" style="left:378px;top:39.70px;height:12px;line-height:12px;font-size:7.47px;color:#0f1216;font-weight:600;white-space:nowrap;">配置</div>
<div style="left:401.9px;top:39.5px;width:1px;height:12.5px;background:#e3e4e8"></div>
<svg style="left:410px;top:39.300px" width="12" height="13" viewBox="0 0 12 13" fill="none" stroke="#2a2d33" stroke-width="1" stroke-linejoin="round" stroke-linecap="round"><rect x=".9" y=".9" width="8" height="2.800" rx="1.200"/><path d="M8.900 2.300h1.200a.9.900 0 0 1 .9.900v1.300a.9.900 0 0 1-.9.900H5.600v1.500"/><rect x="4.600" y="6.900" width="2" height="4.800" rx="1"/></svg>
<div style="left:304.6px;top:69.2px;width:642.7px;height:363.7px;background:#ae80ff;border-radius:1.5px"></div>
<div style="left:306.5px;top:71.1px;width:639px;height:359.6px;background:#efe6ff"></div>
<div style="left:307px;top:71.5px;width:638px;height:358.8px;overflow:hidden;background:#dccba6"><svg style="left:0;top:0" width="638" height="358.8" viewBox="0 0 638 358.8">
<defs>
<linearGradient id="pg" gradientUnits="userSpaceOnUse" x1="0" y1="0" x2="0" y2="358.8"><stop offset="0" stop-color="#c3aa76"/><stop offset=".03" stop-color="#c9b280"/><stop offset=".07" stop-color="#d3bf92"/><stop offset=".12" stop-color="#d9c79e"/><stop offset=".2" stop-color="#dccba5"/><stop offset=".5" stop-color="#decea9"/><stop offset=".9" stop-color="#ddcca6"/><stop offset="1" stop-color="#d8c69c"/></linearGradient>
<linearGradient id="hg" gradientUnits="userSpaceOnUse" x1="0" y1="0" x2="0" y2="358.8"><stop offset="0" stop-color="#c5ac7a"/><stop offset=".05" stop-color="#cdb686"/><stop offset=".12" stop-color="#d6c297"/><stop offset=".3" stop-color="#dac89f"/><stop offset="1" stop-color="#d9c69c"/></linearGradient>
<radialGradient id="st1"><stop offset="0" stop-color="#cdb887" stop-opacity=".35"/><stop offset="1" stop-color="#cdb887" stop-opacity="0"/></radialGradient>
<radialGradient id="st2"><stop offset="0" stop-color="#e6d9bb" stop-opacity=".45"/><stop offset="1" stop-color="#e6d9bb" stop-opacity="0"/></radialGradient>
<linearGradient id="ls" x1="0" y1="0" x2="1" y2="0"><stop offset="0" stop-color="#b89c66" stop-opacity=".12"/><stop offset=".12" stop-color="#b89c66" stop-opacity="0"/><stop offset=".9" stop-color="#b89c66" stop-opacity="0"/><stop offset="1" stop-color="#b89c66" stop-opacity=".08"/></linearGradient>
</defs>
<rect width="638" height="358.8" fill="url(#pg)"/>
<ellipse cx="190" cy="52" rx="40" ry="10" fill="url(#st1)"/>
<ellipse cx="80" cy="72" rx="45" ry="9" fill="url(#st1)" opacity=".8"/>
<ellipse cx="110" cy="200" rx="40" ry="60" fill="url(#st1)" opacity=".5"/>
<ellipse cx="470" cy="120" rx="90" ry="50" fill="url(#st2)" opacity=".6"/>
<ellipse cx="250" cy="320" rx="90" ry="30" fill="url(#st2)" opacity=".5"/>
<ellipse cx="240" cy="235" rx="50" ry="40" fill="url(#st1)" opacity=".45"/>
<rect x="0" y="0" width="31.200" height="358.8" fill="#0d0d0c"/>
<rect x="607.4" y="0" width="30.600" height="358.8" fill="#0d0d0c"/>
<rect x="8.200" y="4.70" width="18.300" height="14" rx="3.200" fill="url(#hg)"/><rect x="611.50" y="4.70" width="18.300" height="14" rx="3.200" fill="url(#hg)"/><rect x="8.200" y="24.75" width="18.300" height="14" rx="3.200" fill="url(#hg)"/><rect x="611.50" y="24.75" width="18.300" height="14" rx="3.200" fill="url(#hg)"/><rect x="8.200" y="44.80" width="18.300" height="14" rx="3.200" fill="url(#hg)"/><rect x="611.50" y="44.80" width="18.300" height="14" rx="3.200" fill="url(#hg)"/><rect x="8.200" y="64.85" width="18.300" height="14" rx="3.200" fill="url(#hg)"/><rect x="611.50" y="64.85" width="18.300" height="14" rx="3.200" fill="url(#hg)"/><rect x="8.200" y="84.90" width="18.300" height="14" rx="3.200" fill="url(#hg)"/><rect x="611.50" y="84.90" width="18.300" height="14" rx="3.200" fill="url(#hg)"/><rect x="8.200" y="104.95" width="18.300" height="14" rx="3.200" fill="url(#hg)"/><rect x="611.50" y="104.95" width="18.300" height="14" rx="3.200" fill="url(#hg)"/><rect x="8.200" y="125.00" width="18.300" height="14" rx="3.200" fill="url(#hg)"/><rect x="611.50" y="125.00" width="18.300" height="14" rx="3.200" fill="url(#hg)"/><rect x="8.200" y="145.05" width="18.300" height="14" rx="3.200" fill="url(#hg)"/><rect x="611.50" y="145.05" width="18.300" height="14" rx="3.200" fill="url(#hg)"/><rect x="8.200" y="165.10" width="18.300" height="14" rx="3.200" fill="url(#hg)"/><rect x="611.50" y="165.10" width="18.300" height="14" rx="3.200" fill="url(#hg)"/><rect x="8.200" y="185.15" width="18.300" height="14" rx="3.200" fill="url(#hg)"/><rect x="611.50" y="185.15" width="18.300" height="14" rx="3.200" fill="url(#hg)"/><rect x="8.200" y="205.20" width="18.300" height="14" rx="3.200" fill="url(#hg)"/><rect x="611.50" y="205.20" width="18.300" height="14" rx="3.200" fill="url(#hg)"/><rect x="8.200" y="225.25" width="18.300" height="14" rx="3.200" fill="url(#hg)"/><rect x="611.50" y="225.25" width="18.300" height="14" rx="3.200" fill="url(#hg)"/><rect x="8.200" y="245.30" width="18.300" height="14" rx="3.200" fill="url(#hg)"/><rect x="611.50" y="245.30" width="18.300" height="14" rx="3.200" fill="url(#hg)"/><rect x="8.200" y="265.35" width="18.300" height="14" rx="3.200" fill="url(#hg)"/><rect x="611.50" y="265.35" width="18.300" height="14" rx="3.200" fill="url(#hg)"/><rect x="8.200" y="285.40" width="18.300" height="14" rx="3.200" fill="url(#hg)"/><rect x="611.50" y="285.40" width="18.300" height="14" rx="3.200" fill="url(#hg)"/><rect x="8.200" y="305.45" width="18.300" height="14" rx="3.200" fill="url(#hg)"/><rect x="611.50" y="305.45" width="18.300" height="14" rx="3.200" fill="url(#hg)"/><rect x="8.200" y="325.50" width="18.300" height="14" rx="3.200" fill="url(#hg)"/><rect x="611.50" y="325.50" width="18.300" height="14" rx="3.200" fill="url(#hg)"/><rect x="8.200" y="345.55" width="18.300" height="14" rx="3.200" fill="url(#hg)"/><rect x="611.50" y="345.55" width="18.300" height="14" rx="3.200" fill="url(#hg)"/><rect x="8.200" y="365.60" width="18.300" height="14" rx="3.200" fill="url(#hg)"/><rect x="611.50" y="365.60" width="18.300" height="14" rx="3.200" fill="url(#hg)"/>
<line x1="319.300" y1="0" x2="319.300" y2="358.8" stroke="#4a4234" stroke-width="1" opacity=".75"/>
<line x1="31" y1="182.200" x2="607.4" y2="182.200" stroke="#5a5240" stroke-width="1" opacity=".62"/>
<circle cx="319" cy="179.400" r="92.400" fill="none" stroke="#2a261e" stroke-width="1.050" opacity=".9"/>
<path d="M429 101l19 13M485 172q9 28 18 47M548 343q17 2 25 14" stroke="#f1e9d6" stroke-width=".6" fill="none" opacity=".4"/>
</svg><div class="t" id="three" style="left:257.1px;top:140.2px;width:125px;height:95px;line-height:95px;text-align:center;font-size:134.5px;color:#0d0d0c;font-weight:400;transform:scale(0.705,1);transform-origin:50% 50%;-webkit-text-stroke:.6px #0d0d0c">3</div></div>
<div style="left:949.1px;top:71.9px;width:21.2px;height:21.2px;border-radius:50%;background:#fff;box-shadow:0 1px 4px rgba(40,50,80,.2),0 0 1px rgba(40,50,80,.2)"></div>
<svg style="left:953.8px;top:76.8px" width="13" height="13" viewBox="0 0 13 13" fill="none" stroke="#3f424a" stroke-width="1.050" stroke-linecap="round" stroke-linejoin="round"><path d="M7.300 2.300A4.100 3.900 0 1 0 3.600 9.600L3.800 11.100 5.500 10.200A4.300 3.900 0 0 0 10.600 6.500"/><path d="M9.900.7l.55 1.350 1.350.55-1.350.55L9.900 4.500l-.55-1.350L8 2.600l1.350-.55z" fill="#3f424a" stroke-width=".3"/></svg>
<div style="left:988.2px;top:406.8px;width:23.2px;height:23.2px;border-radius:50%;background:linear-gradient(150deg,#2fc4d2,#5b6be6 55%,#8b4ee8);box-shadow:0 2px 5px rgba(40,50,90,.22)"></div>
<div style="left:989.5px;top:408.1px;width:20.6px;height:20.6px;border-radius:50%;background:#fff"></div>
<svg style="left:993.300px;top:411.800px" width="13" height="13" viewBox="0 0 13 13"><defs><linearGradient id="mg" x1="0" y1="0" x2="1" y2="1"><stop offset="0" stop-color="#2f9fd8"/><stop offset="1" stop-color="#6a3fe0"/></linearGradient></defs><path d="M7 2.800l1.100 2.700 2.700 1.100-2.700 1.100L7 10.400 5.900 7.700 3.200 6.600l2.700-1.100z" fill="url(#mg)"/><circle cx="3.300" cy="3" r="1" fill="#3a9fd6"/><circle cx="10.300" cy="2.800" r=".8" fill="#4a6fe0"/><circle cx="3.300" cy="10.300" r=".8" fill="#5a55e0"/></svg>
<div style="left:227px;top:443.5px;width:797px;height:85.5px;background:#fff"></div>
<svg style="left:602.500px;top:435.300px" width="47" height="9" viewBox="0 0 47 9"><path d="M0 9C7 9 6.500 1.500 13 1.500H34C40.500 1.500 40 9 47 9z" fill="#fff"/><path d="M22.100 5.400l1.500 1.400 1.500-1.400" fill="none" stroke="#4a4d56" stroke-width="1.100" stroke-linecap="round" stroke-linejoin="round"/></svg>
<div style="left:227px;top:33px;width:1px;height:496px;background:linear-gradient(180deg,#2b2c2e 0,#2b2c2e 0) ;opacity:0"></div>
<div style="left:238.2px;top:462.4px;width:28.8px;height:28.8px;border-radius:50%;background:#fff;box-shadow:0 1px 5px rgba(50,55,80,.18),0 0 1px rgba(50,55,80,.25)"></div>
<svg style="left:248.700px;top:472.200px" width="9" height="9.500" viewBox="0 0 10 11"><path d="M1.200 1.200v8.600a.5.500 0 0 0 .75.430l7.100-4.300a.5.500 0 0 0 0-.86L1.950.77A.5.500 0 0 0 1.200 1.200z" fill="#0d0f12"/></svg>
<svg style="left:276.400px;top:441.200px" width="8.500" height="5.500" viewBox="0 0 9 6"><path d="M1.200.6h6.600a.6.600 0 0 1 .45 1L5 5.100a.7.700 0 0 1-1 0L.75 1.600A.6.600 0 0 1 1.200.6z" fill="#0d0f12"/></svg>
<div style="left:280.1px;top:451.7px;width:1.6px;height:45.3px;background:#45474c"></div>
<svg width="0" height="0" style="left:0;top:0"><defs>
<symbol id="tpaper" viewBox="0 0 69 35" preserveAspectRatio="none">
<rect width="69" height="35" fill="#ddcda8"/>
<rect width="69" height="1.500" fill="#cdb682" opacity=".9"/>
<rect y="1.500" width="69" height="2" fill="#d4bf90" opacity=".5"/>
<rect y="33.800" width="69" height="1.200" fill="#cfb987" opacity=".8"/>
<line x1=".7" y1="0" x2=".7" y2="35" stroke="#3a3322" stroke-width="1.400" stroke-dasharray=".8 .8" opacity=".75"/>
<rect x="61.300" width="2.400" height="35" fill="#16140f"/>
<line x1="60.200" y1="0" x2="60.200" y2="35" stroke="#2a2518" stroke-width="1.600" stroke-dasharray=".8 .8" opacity=".85"/>
<line x1="64.800" y1="0" x2="64.800" y2="35" stroke="#2a2518" stroke-width="1.600" stroke-dasharray=".8 .8" opacity=".85"/>
<line x1="30.300" y1="0" x2="30.300" y2="35" stroke="#efe6cc" stroke-width=".5" opacity=".8"/>
<line x1="0" y1="17.800" x2="60" y2="17.800" stroke="#b0a07a" stroke-width=".4" opacity=".6"/>
<circle cx="30.300" cy="17.600" r="9" fill="none" stroke="#8a7c5c" stroke-width=".4" opacity=".6"/>
</symbol></defs></svg>
<div style="left:281.7px;top:450.5px;width:67.2px;height:38.2px;border-radius:5.500px;background:#fff;border:1.700px solid #8a909c;box-shadow:0 0 0 .6px rgba(135,146,166,.3)"></div>
<div style="left:283.6px;top:452.3px;width:63.4px;height:34.6px;overflow:hidden;border-radius:4px;"><svg style="left:0;top:0" width="63.4" height="34.6"><use href="#tpaper" width="63.4" height="34.6"/></svg><div style="left:0;top:19.6px;width:24px;height:13px;background:radial-gradient(ellipse at 0% 100%,rgba(255,255,255,1) 0,rgba(255,255,255,.8) 35%,rgba(255,255,255,0) 72%)"></div><div class="t" style="left:17.840869565217393px;top:0;width:20px;height:34.6px;line-height:35.800000000000004px;text-align:center;font-size:12.500px;color:#33302a;transform:scaleX(.7);font-weight:400">3</div><div class="t" style="left:1.5px;top:23.5px;height:9px;line-height:9px;font-size:6.500px;color:#1a1c20;font-weight:500;white-space:nowrap">5.2秒</div></div>
<div style="left:357px;top:452.3px;width:68.7px;height:34.6px;overflow:hidden;border-radius:4px;"><svg style="left:0;top:0" width="68.7" height="34.6"><use href="#tpaper" width="68.7" height="34.6"/></svg><div style="left:0;top:19.6px;width:24px;height:13px;background:radial-gradient(ellipse at 0% 100%,rgba(255,255,255,1) 0,rgba(255,255,255,.8) 35%,rgba(255,255,255,0) 72%)"></div><div class="t" style="left:20.16826086956522px;top:0;width:20px;height:34.6px;line-height:35.800000000000004px;text-align:center;font-size:12.500px;color:#33302a;transform:scaleX(.7);font-weight:400">2</div><div class="t" style="left:4.7px;top:23.5px;height:9px;line-height:9px;font-size:6.500px;color:#1a1c20;font-weight:500;white-space:nowrap">5.2秒</div></div>
<div style="left:434px;top:452.3px;width:68.5px;height:34.6px;overflow:hidden;border-radius:4px;"><svg style="left:0;top:0" width="68.5" height="34.6"><use href="#tpaper" width="68.5" height="34.6"/></svg><div style="left:0;top:19.6px;width:24px;height:13px;background:radial-gradient(ellipse at 0% 100%,rgba(255,255,255,1) 0,rgba(255,255,255,.8) 35%,rgba(255,255,255,0) 72%)"></div><div class="t" style="left:20.080434782608698px;top:0;width:20px;height:34.6px;line-height:35.800000000000004px;text-align:center;font-size:12.500px;color:#33302a;transform:scaleX(.7);font-weight:400">1</div><div class="t" style="left:4.7px;top:23.5px;height:9px;line-height:9px;font-size:6.500px;color:#1a1c20;font-weight:500;white-space:nowrap">5.2秒</div></div>
<div style="left:510.5px;top:452.3px;width:68.7px;height:34.6px;overflow:hidden;border-radius:4px;"><svg style="left:0;top:0" width="68.7" height="34.6"><use href="#tpaper" width="68.7" height="34.6"/></svg><div style="left:0;top:19.6px;width:24px;height:13px;background:radial-gradient(ellipse at 0% 100%,rgba(255,255,255,1) 0,rgba(255,255,255,.8) 35%,rgba(255,255,255,0) 72%)"></div><div class="t" style="left:4.7px;top:23.5px;height:9px;line-height:9px;font-size:6.500px;color:#1a1c20;font-weight:500;white-space:nowrap">5.2秒</div></div>
<div style="left:587px;top:452.3px;width:65px;height:34.6px;overflow:hidden;border-radius:4px;"><svg style="left:0;top:0" width="65" height="34.6"><use href="#dark" width="65" height="34.6"/></svg><div class="t" style="left:4.700px;top:23.5px;height:9px;line-height:9px;font-size:6.500px;color:#fff;font-weight:700;white-space:nowrap">5.0秒</div></div>
<div style="left:660.5px;top:452.3px;width:222.7px;height:34.6px;overflow:hidden;border-radius:4px;"><svg style="left:0;top:0" width="222.7" height="34.6"><rect width="222.7" height="34.6" fill="#d3c3ba"/><svg x="2.50" y="0" width="54.60" height="34.6" viewBox="0 0 54.60 34.6" preserveAspectRatio="none" overflow="hidden"><use href="#wed" x="2.5" y="0" width="54.5" height="34.6"/></svg><svg x="63.10" y="0" width="55.00" height="34.6" viewBox="0 0 55.00 34.6" preserveAspectRatio="none" overflow="hidden"><use href="#wed2" x="0" y="0" width="54.5" height="34.6"/></svg><svg x="124.10" y="0" width="54.60" height="34.6" viewBox="0 0 54.60 34.6" preserveAspectRatio="none" overflow="hidden"><use href="#wed2" x="3" y="0" width="54.5" height="34.6"/></svg><svg x="184.70" y="0" width="38.00" height="34.6" viewBox="0 0 38.00 34.6" preserveAspectRatio="none" overflow="hidden"><use href="#wed2" x="8" y="0" width="54.5" height="34.6"/></svg><rect x="57.10" y="0" width="6" height="34.6" fill="#1c1a14"/><line x1="58.40" y1="0" x2="58.40" y2="34.6" stroke="#b8a474" stroke-width="1.100" stroke-dasharray=".9 .9"/><line x1="61.80" y1="0" x2="61.80" y2="34.6" stroke="#b8a474" stroke-width="1.100" stroke-dasharray=".9 .9"/><rect x="118.10" y="0" width="6" height="34.6" fill="#1c1a14"/><line x1="119.40" y1="0" x2="119.40" y2="34.6" stroke="#b8a474" stroke-width="1.100" stroke-dasharray=".9 .9"/><line x1="122.80" y1="0" x2="122.80" y2="34.6" stroke="#b8a474" stroke-width="1.100" stroke-dasharray=".9 .9"/><rect x="178.70" y="0" width="6" height="34.6" fill="#1c1a14"/><line x1="180.00" y1="0" x2="180.00" y2="34.6" stroke="#b8a474" stroke-width="1.100" stroke-dasharray=".9 .9"/><line x1="183.40" y1="0" x2="183.40" y2="34.6" stroke="#b8a474" stroke-width="1.100" stroke-dasharray=".9 .9"/><rect x="0" y="0" width="2.500" height="34.6" fill="#3a3424" opacity=".85"/><line x1="1.200" y1="0" x2="1.200" y2="34.6" stroke="#b8a474" stroke-width="1.100" stroke-dasharray=".9 .9" opacity=".8"/></svg><div style="left:0;top:16.6px;width:26px;height:13px;background:radial-gradient(ellipse at 0% 100%,rgba(255,255,255,1) 0,rgba(255,255,255,.75) 35%,rgba(255,255,255,0) 72%)"></div><div class="t" style="left:4.700px;top:23.5px;height:9px;line-height:9px;font-size:6.500px;color:#1a1c20;font-weight:500;white-space:nowrap;letter-spacing:-.35px">17.2秒</div></div>
<div style="left:891.6px;top:452.3px;width:65px;height:34.6px;overflow:hidden;border-radius:4px;"><svg style="left:0;top:0" width="65" height="34.6"><use href="#dark" width="65" height="34.6"/></svg><div class="t" style="left:4.700px;top:23.5px;height:9px;line-height:9px;font-size:6.500px;color:#fff;font-weight:700;white-space:nowrap">5.0秒</div></div>
<div style="left:651.3px;top:464.5px;width:10px;height:10px;border-radius:50%;background:#fff"></div>
<svg style="left:652.8px;top:467px" width="7" height="5" viewBox="0 0 7 5"><path d="M.6.700v3.600l2.900-1.800zM6.400.700v3.600L3.500 2.500z" fill="none" stroke="#2a2d33" stroke-width=".7" stroke-linejoin="round"/></svg>
<div style="left:882.6px;top:464.5px;width:10px;height:10px;border-radius:50%;background:#fff"></div>
<svg style="left:884.1px;top:467px" width="7" height="5" viewBox="0 0 7 5"><path d="M.6.700v3.600l2.900-1.800zM6.400.700v3.600L3.500 2.500z" fill="none" stroke="#2a2d33" stroke-width=".7" stroke-linejoin="round"/></svg>
<div style="left:963px;top:452.3px;width:51.4px;height:34.6px;border-radius:4px;background:#f1f2f5"></div>
<svg style="left:984px;top:465px" width="9" height="9" viewBox="0 0 9 9"><path d="M4.500 1v7M1 4.500h7" stroke="#2a2d33" stroke-width=".9" stroke-linecap="round"/></svg>
<div style="left:322px;top:495.3px;width:634.6px;height:2.1px;background:#2db4f5;border-radius:1px"></div>
<svg style="left:235.500px;top:516.500px" width="10" height="9" viewBox="0 0 10 9" fill="none" stroke="#3a3d44" stroke-width=".9" stroke-linecap="round"><path d="M.8 1h6.800M.8 3.300h4.600M.8 5.600h2.600"/><path d="M4.200 8l.4-1.700L8.300 2.600l1.200 1.200L5.800 7.500z" fill="#3a3d44" stroke-width=".5" stroke-linejoin="round"/></svg>
<div class="t" style="left:248.8px;top:515.30px;height:12px;line-height:12px;font-size:7.47px;color:#15181c;font-weight:600;white-space:nowrap;">メモ</div>
<div style="left:272.3px;top:512.3px;width:36px;height:16.7px;border-radius:2.5px 2.5px 0 0;background:#e6e8ec"></div>
<svg style="left:275.200px;top:516.500px" width="11" height="9" viewBox="0 0 11 9" fill="none" stroke="#2a2d33" stroke-width=".95" stroke-linejoin="round"><rect x=".6" y=".6" width="9.800" height="7.400" rx="1.400"/><path d="M4.700 3.100v2.400l1.900-1.200z" fill="#2a2d33" stroke-width=".4"/></svg>
<div class="t" style="left:289.3px;top:516.00px;height:12px;line-height:12px;font-size:7.47px;color:#15181c;font-weight:600;white-space:nowrap;">時間</div>
<div class="t" style="left:725.3px;top:515.30px;height:12px;line-height:12px;font-size:7.6px;color:#1e2126;font-weight:400;white-space:nowrap;letter-spacing:.42px;-webkit-text-stroke:.15px #1e2126;">0:00 / 0:48</div>
<div style="left:775.2px;top:515px;width:1px;height:12px;background:#e3e4e8"></div>
<svg style="left:785px;top:515.500px" width="12" height="11" viewBox="0 0 12 11" fill="none"><rect x=".9" y=".8" width="10.200" height="6" rx="1" stroke="#3a3d44" stroke-width=".9"/><path d="M1 9.600h2.600M4.700 9.600h2.600M8.400 9.600H11" stroke="#b5b8be" stroke-width="1.400"/></svg>
<div style="left:805.4px;top:520.5px;width:106.6px;height:1.1px;background:#c8cad0;border-radius:1px"></div>
<div style="left:805.4px;top:520.4px;width:49px;height:1.3px;background:#8a8d94;border-radius:1px"></div>
<div style="left:849.7px;top:516px;width:10px;height:10px;border-radius:50%;background:#0d0f12"></div>
<div class="t" style="left:926px;top:515.30px;height:12px;line-height:12px;font-size:7.6px;color:#1e2126;font-weight:400;white-space:nowrap;-webkit-text-stroke:.15px #1e2126;">62%</div>
<svg style="left:963.800px;top:516.300px" width="10" height="10" viewBox="0 0 10 10" fill="none" stroke="#2a2d33" stroke-width=".9" stroke-linejoin="round"><rect x=".7" y=".7" width="3.300" height="3.300" rx=".7"/><rect x="6" y=".7" width="3.300" height="3.300" rx=".7"/><rect x=".7" y="6" width="3.300" height="3.300" rx=".7"/><rect x="6" y="6" width="3.300" height="3.300" rx=".7"/></svg>
<svg style="left:985px;top:516.300px" width="10" height="10" viewBox="0 0 10 10" fill="none" stroke="#15181c" stroke-width="1" stroke-linecap="round" stroke-linejoin="round"><path d="M6 1h3v3M9 1L5.800 4.200M4 9H1V6M1 9l3.200-3.200"/></svg>
<svg style="left:1005.800px;top:515.500px" width="12" height="12" viewBox="0 0 12 12" fill="none" stroke="#15181c" stroke-width=".95" stroke-linecap="round"><circle cx="6" cy="6" r="5.200"/><path d="M4.600 4.700a1.450 1.450 0 1 1 2.200 1.250c-.5.300-.8.600-.8 1.150"/><circle cx="6" cy="8.900" r=".35" fill="#15181c"/></svg>
<svg style="left:226.800px;top:260.300px" width="7" height="42.500" viewBox="0 0 7 42.500"><path d="M0 0C0 6 6.700 5.500 6.700 12V30.500C6.700 37 0 36.500 0 42.500z" fill="#252627"/><path d="M3.700 20.300L2.300 22l1.400 1.700" fill="none" stroke="#e8e9eb" stroke-width=".8" stroke-linecap="round" stroke-linejoin="round"/></svg>
</div></body></html>
